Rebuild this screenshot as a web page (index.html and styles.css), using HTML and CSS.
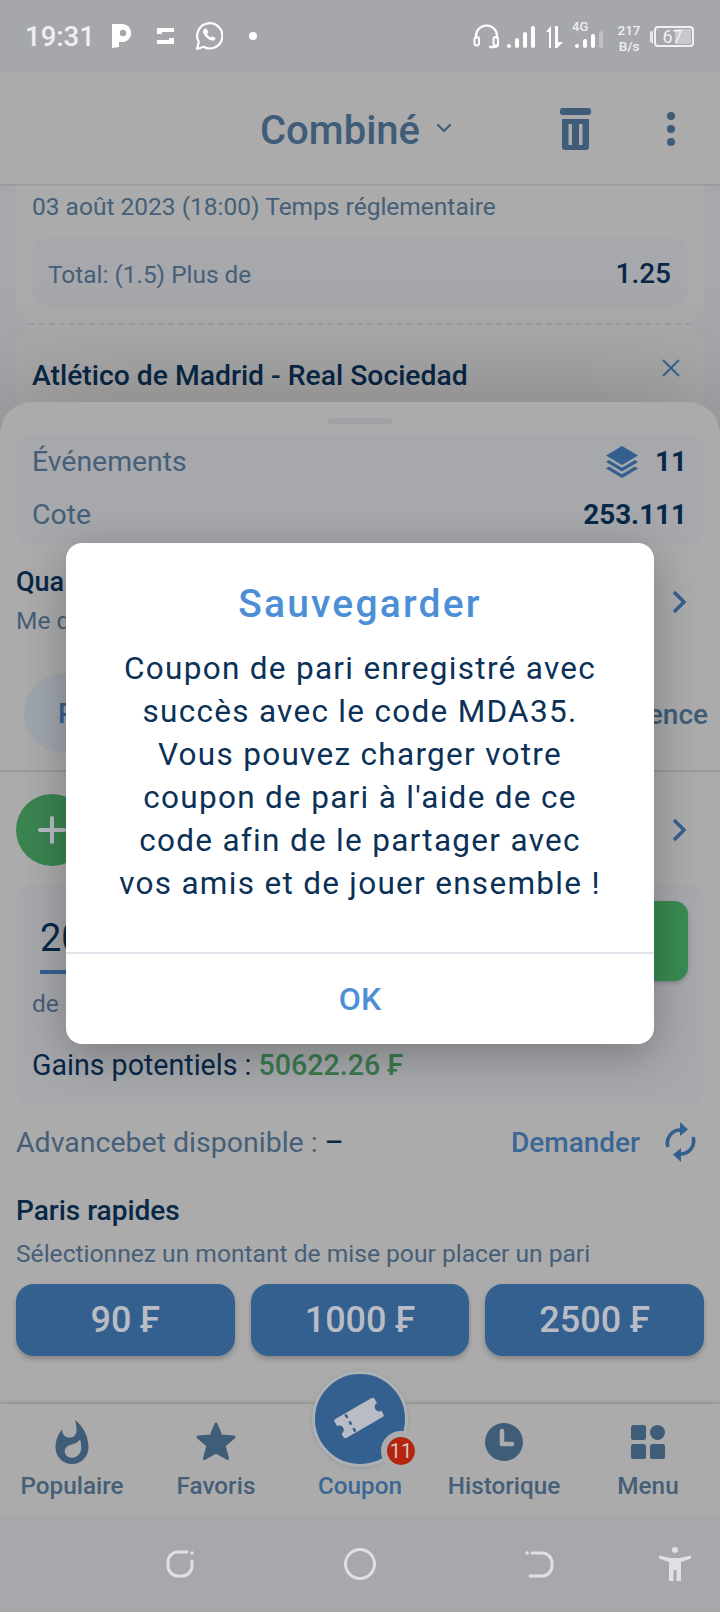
FILE: index.html
```html
<!DOCTYPE html>
<html lang="fr">
<head>
<meta charset="utf-8">
<title>Combiné</title>
<link rel="stylesheet" href="styles.css">
</head>
<body>
<div class="screen">
  <div class="status">
    <div class="status-left">
      <span class="time">19:31</span>
      <svg class="ic-p" viewBox="0 0 20 25"><path d="M0 1h10.500a9 9 0 0 1 1 17.900L7 19v5l-7 1z" fill="#fff"/><circle cx="11" cy="10" r="3.200" fill="#a5a7ab"/></svg>
      <svg class="ic-swap" viewBox="0 0 17 16"><path d="M0 0h17v4H5v2H0zM17 16H0v-4h12v-2h5z" fill="#fff"/></svg>
      <svg class="ic-wa" viewBox="0 0 28 30"><path d="M2 28l1.800-7A12.600 12.600 0 1 1 8.600 25.800z" fill="none" stroke="#fff" stroke-width="2.200" stroke-linejoin="round"/><path d="M10 7.500c-1.800 1-2.500 2.800-1.500 5 1.500 3.200 4 5.500 7.500 6.800 2.300.7 4-.3 4.700-2.100l-3.400-2-1.500 1.300c-1.700-.8-3-2.100-3.800-3.800l1.300-1.500-1.900-3.700z" fill="#fff"/></svg>
      <span class="dot"></span>
    </div>
    <div class="status-right">
      <svg class="ic-head" viewBox="0 0 27 25"><path d="M3 15v-3a10.500 10.500 0 0 1 21 0v3" fill="none" stroke="#fff" stroke-width="2.200"/><rect x="1.500" y="13" width="4.500" height="8.500" rx="2.200" fill="none" stroke="#fff" stroke-width="2"/><rect x="20.500" y="13" width="4.500" height="8.500" rx="2.200" fill="none" stroke="#fff" stroke-width="2"/><path d="M25 20c0 2.500-2 3-5 3h-4" fill="none" stroke="#fff" stroke-width="2.400"/></svg>
      <svg class="ic-sig" viewBox="0 0 28 22"><g fill="#fff"><rect x="0" y="18" width="4" height="4" rx="2"/><rect x="8" y="12" width="4" height="10" rx="2"/><rect x="16" y="6" width="4" height="16" rx="2"/><rect x="24" y="0" width="4" height="22" rx="2"/></g></svg>
      <svg class="ic-updown" viewBox="0 0 19 22"><path d="M3 22V6H0l5-6v22zM9 0h3v16h5l-6 6H9z" fill="#fff"/></svg>
      <div class="net">
        <span class="net-label">4G</span>
        <svg class="ic-sig2" viewBox="0 0 28 17"><g fill="#fff"><rect x="0" y="13" width="4" height="4" rx="2"/><rect x="8" y="8" width="4" height="9" rx="2"/><rect x="16" y="3" width="4" height="14" rx="2"/><rect x="24" y="0" width="4" height="17" rx="2" opacity=".3"/></g></svg>
      </div>
      <div class="speed"><span>217</span><span>B/s</span></div>
      <div class="battery-wrap">
        <span class="battery-tip"></span>
        <div class="battery"><span class="battery-fill"></span><span class="battery-num">67</span></div>
      </div>
    </div>
  </div>

  <header class="topbar">
    <div class="title-wrap">
      <span class="title">Combiné</span>
      <svg class="title-chev" viewBox="0 0 16 10"><path d="M1.500 1.500L8 8l6.500-6.500" fill="none" stroke="#3f5c78" stroke-width="2"/></svg>
    </div>
    <svg class="ic-trash" viewBox="0 0 31 42"><rect x="0" y="0" width="31" height="7" rx="2.500" fill="#3f5c78"/><path d="M2 11h27v28a3 3 0 0 1-3 3H5a3 3 0 0 1-3-3z" fill="#3f5c78"/><rect x="8.500" y="16" width="3.500" height="21" fill="#ababab"/><rect x="19" y="16" width="3.500" height="21" fill="#ababab"/></svg>
    <div class="kebab"><span></span><span></span><span></span></div>
  </header>

  <main class="content">
    <section class="ticket">
      <p class="ticket-date">03 août 2023 (18:00) Temps réglementaire</p>
      <div class="odds-box"><span class="odds-label">Total: (1.5) Plus de</span><span class="odds-value">1.25</span></div>
      <div class="perforation"><span class="notch notch-l"></span><span class="notch notch-r"></span></div>
    </section>
    <section class="ticket ticket-next">
      <div class="match-row">
        <span class="match-name">Atlético de Madrid - Real Sociedad</span>
        <svg class="ic-close" viewBox="0 0 20 20"><path d="M2 2l16 16M18 2L2 18" stroke="#3c6794" stroke-width="2.200" fill="none"/></svg>
      </div>
    </section>

    <section class="sheet">
      <div class="grip"></div>
      <div class="summary">
        <div class="summary-row">
          <span class="summary-label">Événements</span>
          <span class="summary-val">
            <svg class="ic-layers" viewBox="0 0 32 32"><path d="M16 0l16 9.500L16 19 0 9.500z" fill="#33608f"/><path d="M3 14l13 7.700L29 14l3 2-16 9.500L0 16z" fill="#33608f"/><path d="M3 20.500l13 7.700 13-7.700 3 2L16 32 0 22.500z" fill="#33608f"/></svg>
            <b>11</b>
          </span>
        </div>
        <div class="summary-row">
          <span class="summary-label">Cote</span>
          <b class="summary-val">253.111</b>
        </div>
      </div>

      <div class="quick">
        <div class="quick-text">
          <span class="quick-title">Qua</span>
          <span class="quick-sub">Me d</span>
        </div>
        <svg class="ic-chev" viewBox="0 0 14 24"><path d="M2 2l10 10L2 22" fill="none" stroke="#33608f" stroke-width="3.400"/></svg>
      </div>

      <div class="pills">
        <span class="pill">P</span>
        <span class="pill-right">ence</span>
      </div>

      <div class="promo">
        <span class="plus"><svg viewBox="0 0 28 28"><path d="M14 2v24M2 14h24" stroke="#b9bcc4" stroke-width="4" stroke-linecap="round" fill="none"/></svg></span>
        <svg class="ic-chev" viewBox="0 0 14 24"><path d="M2 2l10 10L2 22" fill="none" stroke="#33608f" stroke-width="3.400"/></svg>
      </div>

      <div class="stake">
        <div class="stake-top">
          <span class="stake-input">20</span>
          <span class="stake-btn"></span>
        </div>
        <span class="stake-de">de</span>
        <p class="gains">Gains potentiels : <b>50622.26 ₣</b></p>
      </div>

      <div class="advance">
        <span class="advance-label">Advancebet disponible : <b>–</b></span>
        <span class="advance-action">
          <span class="demander">Demander</span>
          <svg class="ic-refresh" viewBox="0 0 33 40"><path d="M4 25a13 13 0 0 1 13-17" fill="none" stroke="#33608f" stroke-width="3.600"/><path d="M16 0l8 7.500L16 14z" fill="#33608f"/><path d="M29 15a13 13 0 0 1-13 17" fill="none" stroke="#33608f" stroke-width="3.600"/><path d="M17 26l-8 6.500L17 40z" fill="#33608f"/></svg>
        </span>
      </div>

      <h2 class="rapid-title">Paris rapides</h2>
      <p class="rapid-sub">Sélectionnez un montant de mise pour placer un pari</p>
      <div class="rapid-grid">
        <span class="rapid-btn">90 ₣</span>
        <span class="rapid-btn">1000 ₣</span>
        <span class="rapid-btn">2500 ₣</span>
      </div>
    </section>
  </main>

  <nav class="tabbar">
    <div class="tab">
      <svg class="tab-flame" viewBox="4 0.670 16 21.330"><path fill-rule="evenodd" d="M13.500.670s.740 2.650.740 4.800c0 2.060-1.350 3.730-3.410 3.730-2.070 0-3.630-1.670-3.630-3.730l.030-.360C5.210 7.510 4 10.620 4 14c0 4.420 3.580 8 8 8s8-3.580 8-8C20 8.610 17.410 3.800 13.500.670zM11.710 19c-1.780 0-3.220-1.400-3.220-3.140 0-1.620 1.050-2.760 2.810-3.120 1.770-.360 3.600-1.210 4.620-2.580.390 1.290.590 2.650.590 4.040 0 2.650-2.150 4.800-4.800 4.800z" fill="#3f5c78"/></svg>
      <span>Populaire</span>
    </div>
    <div class="tab">
      <svg class="tab-ic" viewBox="0 0 44 44"><path d="M22 4l5 12 13 1-10 8.500 3.500 13L22 32l-11.500 6.500 3.500-13L4 17l13-1z" fill="#3f5c78" stroke="#3f5c78" stroke-width="3" stroke-linejoin="round"/></svg>
      <span>Favoris</span>
    </div>
    <div class="tab tab-active"><span class="tab-spacer"></span><span>Coupon</span></div>
    <div class="tab">
      <svg class="tab-ic" viewBox="0 0 44 44"><circle cx="22" cy="22" r="19" fill="#3f5c78"/><path d="M20 11v13h10" fill="none" stroke="#ababab" stroke-width="4.500" stroke-linecap="round" stroke-linejoin="round"/></svg>
      <span>Historique</span>
    </div>
    <div class="tab">
      <svg class="tab-ic" viewBox="0 0 44 44"><g fill="#3f5c78"><rect x="5" y="5" width="15" height="15" rx="2.500"/><circle cx="31.500" cy="12.500" r="7.500"/><rect x="5" y="24" width="15" height="15" rx="2.500"/><rect x="24" y="24" width="15" height="15" rx="2.500"/></g></svg>
      <span>Menu</span>
    </div>
    <div class="coupon-fab">
      <svg class="ic-ticket" viewBox="0 0 50 40"><g transform="rotate(-30 25 20)"><path d="M4 9h42a2 2 0 0 1 2 2v5a4.500 4.500 0 0 0 0 9v4a2 2 0 0 1-2 2H4a2 2 0 0 1-2-2v-4a4.500 4.500 0 0 0 0-9v-5a2 2 0 0 1 2-2z" fill="#b9bcc4"/><path d="M15 10v22" stroke="#33608f" stroke-width="2.500" stroke-dasharray="4 4" fill="none"/></g></svg>
    </div>
    <span class="badge">11</span>
  </nav>

  <div class="sysnav">
    <svg class="sys-ic" viewBox="0 0 32 32"><path d="M23 4H14A10 10 0 0 0 4 14v4a10 10 0 0 0 10 10h4a10 10 0 0 0 10-10v-5" fill="none" stroke="#dfe0e2" stroke-width="3" stroke-linecap="round"/><circle cx="28" cy="5" r="1.800" fill="#dfe0e2"/></svg>
    <svg class="sys-ic" viewBox="0 0 32 32"><circle cx="16" cy="16" r="14.500" fill="none" stroke="#dfe0e2" stroke-width="3"/></svg>
    <svg class="sys-ic" viewBox="0 0 32 32"><path d="M8 5h10a10 10 0 0 1 10 10v3a10 10 0 0 1-10 10H6" fill="none" stroke="#dfe0e2" stroke-width="3" stroke-linecap="round"/><circle cx="3" cy="5" r="1.800" fill="#dfe0e2"/></svg>
    <svg class="sys-acc" viewBox="0 0 32 34"><circle cx="16" cy="3" r="3" fill="#dfe0e2"/><path d="M0 8.500L11 11h10l11-2.500v3L22 15v19h-4.500V23h-3v11H10V15L0 11.500z" fill="#dfe0e2"/></svg>
  </div>

  <div class="modal">
    <h1 class="modal-title">Sauvegarder</h1>
    <p class="modal-body">Coupon de pari enregistré avec<br>succès avec le code MDA35.<br>Vous pouvez charger votre<br>coupon de pari à l'aide de ce<br>code afin de le partager avec<br>vos amis et de jouer ensemble !</p>
    <div class="modal-ok">OK</div>
  </div>
</div>
</body>
</html>
```
FILE: styles.css
```css
* { box-sizing: border-box; margin: 0; padding: 0; }
html, body { width: 720px; height: 1612px; overflow: hidden; background: #a6a8ac; }
body { font-family: Roboto, "Liberation Sans", sans-serif; color: #082848; }
svg { display: block; flex: none; }
b { font-weight: 500; }

.screen { position: relative; width: 720px; height: 1612px; display: flex; flex-direction: column; overflow: hidden; background: #a6a8ac; }

/* status bar */
.status { height: 72px; flex: none; background: #a5a7ab; display: flex; justify-content: space-between; align-items: flex-start; padding: 0 26px 0 25px; color: #fff; }
.status-left { display: flex; align-items: center; height: 72px; }
.time { font-size: 27.500px; font-weight: 500; color: #eeeff0; width: 87px; }
.ic-p { width: 20px; height: 25px; margin-right: 25px; margin-top: -1px; }
.ic-swap { width: 17px; height: 16px; margin-right: 21px; }
.ic-wa { width: 28px; height: 30px; margin-right: 26px; }
.dot { width: 8px; height: 8px; border-radius: 50%; background: #fff; }
.status-right { display: flex; align-items: flex-start; padding-top: 22px; }
.ic-head { width: 27px; height: 25px; margin-top: 2px; margin-right: 7px; }
.ic-sig { width: 28px; height: 22px; margin-top: 4px; margin-right: 11px; }
.ic-updown { width: 19px; height: 22px; margin-top: 4px; margin-right: 7px; }
.net { width: 31px; height: 26px; position: relative; margin-right: 14px; }
.net-label { display: block; font-size: 13px; line-height: 10px; font-weight: 500; color: #eeeff0; }
.ic-sig2 { width: 28px; height: 17px; margin-left: 3px; margin-top: -1px; }
.speed { display: flex; flex-direction: column; align-items: center; font-size: 13.500px; line-height: 16px; font-weight: 500; color: #eeeff0; width: 24px; margin-right: 9px; }
.battery-wrap { display: flex; align-items: center; margin-top: 4px; }
.battery-tip { width: 3px; height: 12px; background: #e6e7e9; border-radius: 2px 0 0 2px; margin-right: 1px; }
.battery { position: relative; width: 40px; height: 21px; border: 2px solid #f0f0f1; border-radius: 4px; display: flex; align-items: center; justify-content: center; }
.battery-fill { position: absolute; right: 1px; top: 1px; bottom: 1px; width: 16px; background: #c8c9cc; border-radius: 1px; }
.battery-num { position: relative; font-size: 18px; color: #eeeff0; margin-right: 3px; }

/* header */
.topbar { height: 112px; flex: none; background: #ababab; display: flex; align-items: center; position: relative; z-index: 2; box-shadow: 0 1px 2px rgba(0,0,0,.14); padding-left: 260px; }
.title-wrap { display: flex; align-items: center; width: 300px; }
.title { font-size: 40px; font-weight: 500; color: #3f5c78; width: 176px; margin-top: 4px; }
.title-chev { width: 16px; height: 10px; }
.ic-trash { width: 31px; height: 42px; margin-top: 2px; }
.kebab { display: flex; flex-direction: column; gap: 5px; margin-left: 76px; margin-top: 1px; }
.kebab span { width: 8px; height: 8px; border-radius: 50%; background: #3f5c78; }

/* scroll content */
.content { position: relative; flex: 1; min-height: 0; padding: 0 16px; overflow: hidden; }
.ticket { background: #ababab; padding: 0 16px; }
.ticket-date { font-size: 24.500px; line-height: 46px; color: #465f78; }
.odds-box { margin-top: 8px; height: 70px; border-radius: 16px; background: #a6a8ac; display: flex; justify-content: space-between; align-items: center; padding: 0 17px 0 16px; }
.odds-label { font-size: 24.400px; color: #465f78; margin-top: 2px; }
.odds-value { font-size: 28px; font-weight: 500; color: #082848; margin-top: 1px; }
.perforation { position: relative; height: 28px; margin: 0 -16px; }
.perforation::before { content: ""; position: absolute; left: 13px; right: 13px; top: 15px; border-top: 2px dashed #9c9ea2; }
.notch { position: absolute; top: 4px; width: 24px; height: 24px; border-radius: 50%; background: #a6a8ac; }
.notch-l { left: -12px; }
.notch-r { right: -12px; }
.ticket-next { height: 300px; }
.match-row { display: flex; justify-content: space-between; padding-top: 20px; }
.match-name { font-size: 28.300px; font-weight: 500; color: #082848; line-height: 40px; }
.ic-close { width: 20px; height: 20px; margin-top: 2px; margin-right: 7px; }

/* bottom sheet */
.sheet { position: absolute; left: 0; right: 0; top: 218px; bottom: 0; background: #ababab; border-radius: 32px 32px 0 0; padding: 16px 16px 0; box-shadow: 0 0 120px rgba(0,0,0,.28); }
.grip { width: 64px; height: 6px; border-radius: 3px; background: #a0a2a8; margin: 0 auto; }
.summary { margin-top: 10px; height: 110px; border-radius: 16px; background: #a6a8ac; padding: 1px 17px 0 16px; }
.summary-row { display: flex; justify-content: space-between; align-items: center; height: 53px; }
.summary-label { font-size: 28.400px; color: #465f78; }
.summary-val { font-size: 27.800px; font-weight: 700; color: #082848; display: flex; align-items: center; }
.summary-val b { font-weight: 700; }
.ic-layers { width: 32px; height: 32px; margin-right: 17px; }

.quick { display: flex; justify-content: space-between; align-items: center; margin-top: 18px; height: 80px; padding-right: 18px; }
.quick-text { display: flex; flex-direction: column; }
.quick-title { font-size: 27px; font-weight: 500; color: #082848; line-height: 38px; }
.quick-sub { font-size: 24.500px; color: #465f78; line-height: 40px; }
.ic-chev { width: 14px; height: 24px; }

.pills { display: flex; justify-content: space-between; align-items: center; margin-top: 31px; margin-right: -4px; height: 80px; padding-left: 8px; }
.pill { width: 110px; height: 80px; border-radius: 40px; background: #9fa5ad; color: #33608f; font-size: 28px; font-weight: 500; display: flex; align-items: center; padding-left: 34px; }
.pill-right { font-size: 28px; font-weight: 500; color: #3f5c78; margin-top: 2px; }

.promo { margin: 17px -16px 0; padding: 23px 34px 0 16px; border-top: 2px solid #98999d; display: flex; justify-content: space-between; align-items: center; height: 94px; }
.plus { width: 72px; height: 72px; border-radius: 50%; background: #3a8450; display: flex; align-items: center; padding-left: 22px; }
.plus svg { width: 28px; height: 28px; }

.stake { margin-top: 20px; height: 221px; border-radius: 16px; background: #a6a8ac; padding: 17px 16px 0; }
.stake-top { display: flex; justify-content: space-between; height: 80px; }
.stake-input { display: block; width: 92px; height: 73px; margin-left: 8px; padding-top: 15px; border-bottom: 4px solid #33608f; font-size: 38px; color: #082848; }
.stake-btn { width: 120px; height: 80px; border-radius: 14px; background: #398a52; box-shadow: 0 2px 4px rgba(0,0,0,.2); }
.stake-de { display: block; font-size: 24.500px; line-height: 30px; margin-top: 8px; color: #465f78; }
.gains { font-size: 28.600px; line-height: 36px; margin-top: 28px; color: #082848; }
.gains b { color: #3a7a4e; font-weight: 500; }

.advance { display: flex; justify-content: space-between; align-items: center; margin-top: 16px; height: 42px; padding-right: 7px; }
.advance-label { font-size: 28.500px; color: #465f78; }
.advance-label b { color: #082848; }
.advance-action { display: flex; align-items: center; }
.demander { font-size: 28px; font-weight: 500; color: #3c6794; }
.ic-refresh { width: 33px; height: 40px; margin-left: 24px; }

.rapid-title { font-size: 28px; font-weight: 500; color: #082848; line-height: 36px; margin-top: 30px; }
.rapid-sub { font-size: 24.600px; color: #465f78; line-height: 32px; margin-top: 9px; }
.rapid-grid { display: grid; grid-template-columns: repeat(3, 1fr); gap: 16px; margin-top: 14px; }
.rapid-btn { height: 72px; border-radius: 18px; background: #33608f; color: #b9bcc4; font-size: 36px; font-weight: 500; display: flex; align-items: center; justify-content: center; box-shadow: 0 3px 5px rgba(0,0,0,.22); }

/* tab bar */
.tabbar { position: relative; flex: none; height: 112px; background: #ababab; display: grid; grid-template-columns: repeat(5, 144px); box-shadow: 0 -2px 3px rgba(0,0,0,.14); z-index: 3; }
.tab { display: flex; flex-direction: column; align-items: center; padding-top: 16px; font-size: 24.300px; font-weight: 500; color: #465f78; }
.tab-ic { width: 44px; height: 44px; margin-bottom: 4px; }
.tab-flame { width: 34px; height: 44px; margin-bottom: 4px; }
.tab-spacer { height: 48px; }
.tab-active { color: #3c6794; }
.tab span:last-child { line-height: 36px; }
.coupon-fab { position: absolute; left: 312px; top: -33px; width: 96px; height: 96px; border-radius: 50%; background: #33608f; border: 3px solid #adb0b5; box-shadow: 0 1px 4px rgba(60,90,130,.2); display: flex; align-items: center; justify-content: center; }
.ic-ticket { width: 50px; height: 40px; margin-left: -2px; margin-top: -2px; }
.badge { position: absolute; left: 381px; top: 27px; width: 40px; height: 40px; border: 6px solid #ababab; border-radius: 50%; background: #b5240c; background-clip: padding-box; color: #d9c9c4; font-size: 20px; font-weight: 400; display: flex; align-items: center; justify-content: center; }

/* system nav */
.sysnav { flex: none; height: 96px; display: grid; grid-template-columns: repeat(3, 180px) 1fr; justify-items: center; align-items: center; padding: 0 0 0 90px; background: #a6a8ac; }
.sys-ic { width: 32px; height: 32px; }
.sys-acc { width: 32px; height: 34px; justify-self: start; margin-left: 29px; }

/* modal */
.modal { position: absolute; left: 66px; top: 543px; width: 588px; height: 501px; background: #fff; border-radius: 16px; box-shadow: 0 10px 44px rgba(0,0,0,.28); z-index: 10; text-align: center; display: flex; flex-direction: column; }
.modal-title { font-size: 39px; font-weight: 500; color: #4d8fd6; letter-spacing: 2.200px; line-height: 42px; margin-top: 40px; }
.modal-body { font-size: 31.500px; line-height: 43px; letter-spacing: 1.300px; color: #0b3157; margin-top: 22px; }
.modal-ok { margin-top: auto; height: 92px; border-top: 2px solid #e1e4ea; color: #4d8fd6; font-size: 32px; font-weight: 500; display: flex; align-items: center; justify-content: center; }
```
